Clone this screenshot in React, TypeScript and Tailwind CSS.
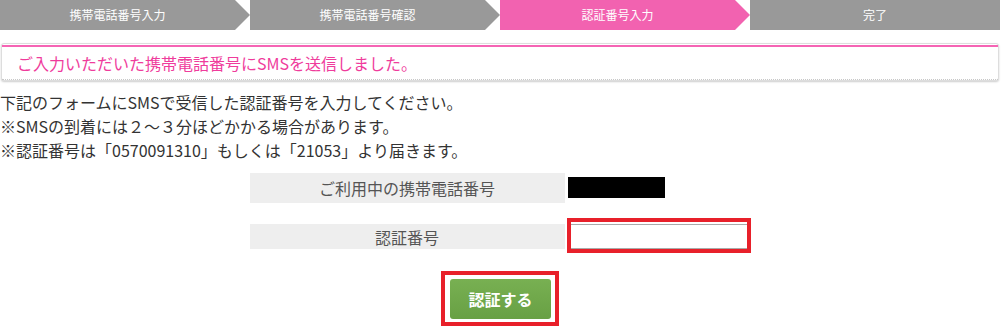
import React from 'react';

const steps = [
  { label: '携帯電話番号入力', active: false, arrow: true },
  { label: '携帯電話番号確認', active: false, arrow: true },
  { label: '認証番号入力', active: true, arrow: true },
  { label: '完了', active: false, arrow: false },
];

const App: React.FC = () => {
  return (
    <div className="w-[1002px] h-[326px] bg-white overflow-hidden font-['Noto_Sans_CJK_JP','Noto_Sans',sans-serif] text-[#333]">
      <div className="w-[1000px]">
        {/* ステップ */}
        <div className="flex h-[30px]">
          {steps.map((s) => (
            <div
              key={s.label}
              className={
                (s.active ? 'bg-[#f262b0] ' : 'bg-[#999999] ') +
                (s.arrow
                  ? 'w-[250px] pr-[15px] [clip-path:polygon(0_0,235px_0,250px_50%,235px_100%,0_100%)] '
                  : 'w-[250px] ') +
                'h-[30px] flex items-center justify-center text-white text-[12px] leading-none'
              }
            >
              {s.label}
            </div>
          ))}
        </div>

        {/* メッセージ */}
        <div className="mt-[13px] mx-[1px] h-[38px] rounded-[3px] border border-[#dddddd] shadow-[0_1px_2px_rgba(0,0,0,0.2)] bg-white pt-[1px]">
          <div className="h-full border-t-2 border-t-[#f564b4] border-b border-b-[#c8c8c8] [border-bottom-style:dotted] flex items-center pl-[15px]">
            <span className="text-[16px] text-[#ef3c9c] leading-none">
              ご入力いただいた携帯電話番号にSMSを送信しました。
            </span>
          </div>
        </div>

        {/* 説明 */}
        <div className="mt-[9px] text-[16px] leading-[24px] text-[#333]">
          <p>下記のフォームにSMSで受信した認証番号を入力してください。</p>
          <p>※SMSの到着には２～３分ほどかかる場合があります。</p>
          <p>※認証番号は「0570091310」もしくは「21053」より届きます。</p>
        </div>

        {/* テーブル */}
        <div className="mt-[11px] flex flex-col items-center">
          <div className="w-[501px] flex">
            <div className="w-[315px] h-[30px] bg-[#eeeeee] flex items-center justify-center text-[16px] text-[#555]">
              ご利用中の携帯電話番号
            </div>
            <div className="pl-[3px] pt-[4px]">
              <div className="w-[97px] h-[21px] bg-black" />
            </div>
          </div>
          <div className="w-[501px] flex mt-[15px]">
            <div className="w-[315px] h-[25px] mt-[6px] bg-[#eeeeee] flex items-center justify-center text-[16px] text-[#555]">
              認証番号
            </div>
            <div className="ml-[2px] w-[184px] h-[35px] border-4 border-[#e8202a] pt-[2px]">
              <input
                type="text"
                className="w-full h-[25px] border-y border-y-[#aaaaaa] border-x-0 bg-white outline-none"
              />
            </div>
          </div>

          {/* ボタン */}
          <div className="mt-[18px] border-4 border-[#e8202a] pl-[5px] pr-[4px] pt-[4px] pb-[3px]">
            <button className="w-[101px] h-[40px] rounded-[3px] bg-gradient-to-b from-[#78b052] to-[#68a044] text-white text-[16px] font-bold flex items-center justify-center">
              認証する
            </button>
          </div>
        </div>
      </div>
    </div>
  );
};

export default App;
